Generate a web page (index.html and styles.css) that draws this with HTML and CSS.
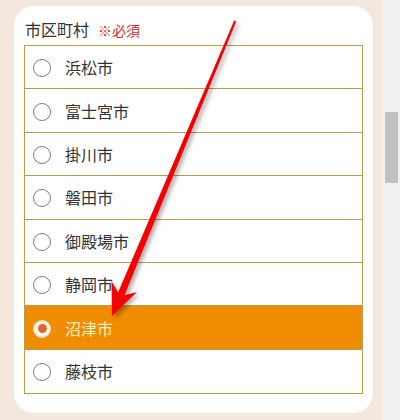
FILE: index.html
```html
<!DOCTYPE html>
<html lang="ja">
<head>
<meta charset="utf-8">
<title>市区町村</title>
<link rel="stylesheet" href="styles.css">
</head>
<body>
<div class="page">
  <div class="main">
    <div class="card">
      <div class="label">市区町村<span class="req">※必須</span></div>
      <ul class="options">
        <li class="option"><span class="radio"></span><span class="name">浜松市</span></li>
        <li class="option"><span class="radio"></span><span class="name">富士宮市</span></li>
        <li class="option"><span class="radio"></span><span class="name">掛川市</span></li>
        <li class="option"><span class="radio"></span><span class="name">磐田市</span></li>
        <li class="option"><span class="radio"></span><span class="name">御殿場市</span></li>
        <li class="option"><span class="radio"></span><span class="name">静岡市</span></li>
        <li class="option selected"><span class="radio"></span><span class="name">沼津市</span></li>
        <li class="option"><span class="radio"></span><span class="name">藤枝市</span></li>
      </ul>
    </div>
  </div>
  <div class="scrollbar"><div class="thumb"></div></div>
</div>
<svg class="arrow" width="400" height="420" viewBox="0 0 400 420" aria-hidden="true">
  <defs>
    <filter id="sh" x="-20%" y="-20%" width="140%" height="140%">
      <feDropShadow dx="2.5" dy="2.5" stdDeviation="2" flood-color="#000" flood-opacity="0.35"/>
    </filter>
  </defs>
  <polygon filter="url(#sh)" fill="#f50000"
    points="236.2,21.6 124.5,295.2 137,292 112,316 111.5,281 118.1,292.5 234.2,20.6"/>
</svg>
</body>
</html>
```

FILE: styles.css
```css
html, body {
  margin: 0;
  padding: 0;
}
body {
  width: 400px;
  height: 420px;
  overflow: hidden;
  font-family: "Noto Sans CJK JP", "Noto Sans", sans-serif;
  color: #333;
  position: relative;
}
.page {
  display: flex;
  height: 420px;
}
.main {
  width: 383px;
  background: #f4e7de;
  padding: 6px 0 0 14px;
  box-sizing: border-box;
}
.card {
  width: 359px;
  height: 407px;
  background: #fff;
  border-radius: 20px;
  box-sizing: border-box;
  padding: 11px 10px 20px;
}
.label {
  font-size: 16px;
  line-height: 24px;
  height: 24px;
  margin-bottom: 4px;
  padding-left: 1px;
  color: #333;
}
.req {
  color: #d22a2a;
  font-size: 14px;
  margin-left: 9px;
}
.options {
  list-style: none;
  margin: 0;
  padding: 0;
  border: 1px solid #b99c4a;
}
.option {
  height: 43.4px;
  box-sizing: border-box;
  border-bottom: 1px solid #b99c4a;
  display: flex;
  align-items: center;
  padding-left: 8px;
  font-size: 16px;
}
.option:last-child {
  border-bottom: none;
}
.radio {
  width: 18px;
  height: 18px;
  box-sizing: border-box;
  border: 1.5px solid #7a7a7a;
  border-radius: 50%;
  background: #fff;
  margin-right: 14px;
  flex: none;
  position: relative;
  top: 1px;
}
.option.selected {
  background: #ef8c00;
  color: #fff0c4;
}
.option.selected .radio {
  border: 2px solid #fbe3cf;
  background: #fff;
  box-shadow: inset 0 0 0 2.5px #fff;
}
.option.selected .radio::after {
  content: "";
  position: absolute;
  left: 2.5px;
  top: 2.5px;
  width: 9px;
  height: 9px;
  border-radius: 50%;
  background: #e2652a;
}
.scrollbar {
  width: 17px;
  background: #f1f1f1;
  padding: 112px 2px 0;
  box-sizing: border-box;
}
.thumb {
  height: 71px;
  background: #c1c1c1;
}
.arrow {
  position: absolute;
  left: 0;
  top: 0;
  pointer-events: none;
}
```
